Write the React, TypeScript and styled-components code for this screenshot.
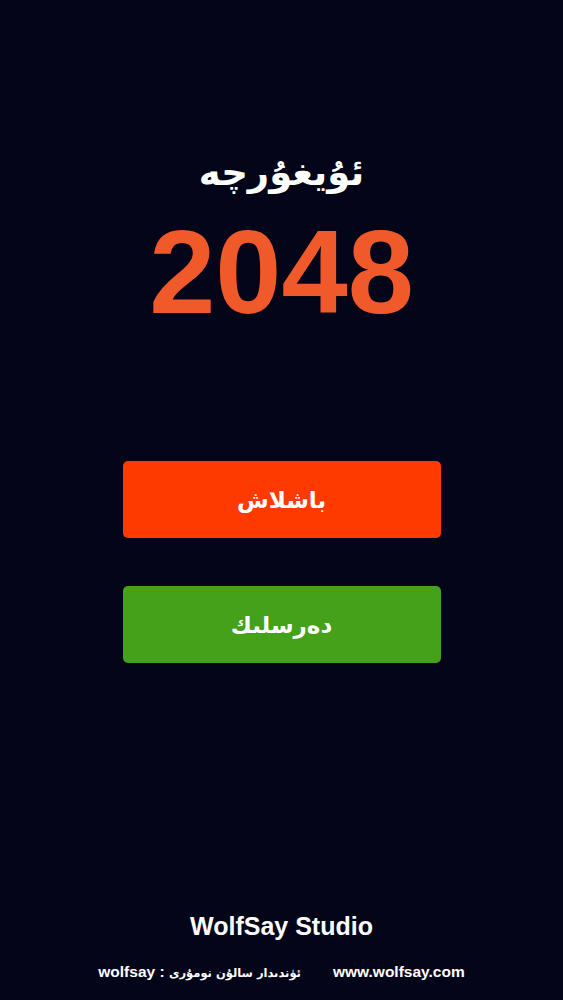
import React from 'react';
import styled, { createGlobalStyle } from 'styled-components';

const Global = createGlobalStyle`
  html, body {
    margin: 0;
    padding: 0;
    background: #05051a;
  }
`

const Page = styled.div`
  height: 1000px;
  display: flex;
  flex-direction: column;
  align-items: center;
  background: #05051a;
  color: #fff;
  font-family: "Liberation Sans", Arial, sans-serif;
`

const Title = styled.h1`
  margin: 150px 0 0;
  font-family: "DejaVu Sans", sans-serif;
  font-weight: bold;
  font-size: 37px;
  line-height: 46px;
  direction: rtl;
`

const Logo = styled.div`
  margin-top: 16px;
  font-weight: bold;
  font-size: 119px;
  line-height: 120px;
  color: #f05a2a;
`

const Buttons = styled.div`
  margin-top: 129px;
  display: flex;
  flex-direction: column;
  gap: 48px;
`

const Button = styled.button<{ $bg: string }>`
  width: 318px;
  height: 77px;
  border: none;
  border-radius: 5px;
  background: ${p => p.$bg};
  color: #fff;
  font-family: "DejaVu Sans", sans-serif;
  font-weight: bold;
  font-size: 23px;
  direction: rtl;
`

const Footer = styled.footer`
  margin-top: auto;
  margin-bottom: 19px;
  display: flex;
  flex-direction: column;
  align-items: center;
  gap: 22px;
`

const Studio = styled.div`
  font-weight: bold;
  font-size: 25px;
`

const Contacts = styled.div`
  display: flex;
  align-items: baseline;
  gap: 32px;
  font-weight: bold;
  font-size: 15.5px;
`

const Arabic = styled.span`
  font-family: "DejaVu Sans", sans-serif;
  font-size: 11.5px;
  direction: rtl;
  unicode-bidi: isolate;
`

export default function App() {
  return (
    <Page>
      <Global />
      <Title>ئۇيغۇرچە</Title>
      <Logo>2048</Logo>
      <Buttons>
        <Button $bg="#ff3a00">باشلاش</Button>
        <Button $bg="#45a11a">دەرسلىك</Button>
      </Buttons>
      <Footer>
        <Studio>WolfSay Studio</Studio>
        <Contacts>
          <span>wolfsay : <Arabic>ئۈندىدار سالۇن نومۇرى</Arabic></span>
          <span>www.wolfsay.com</span>
        </Contacts>
      </Footer>
    </Page>
  );
}
